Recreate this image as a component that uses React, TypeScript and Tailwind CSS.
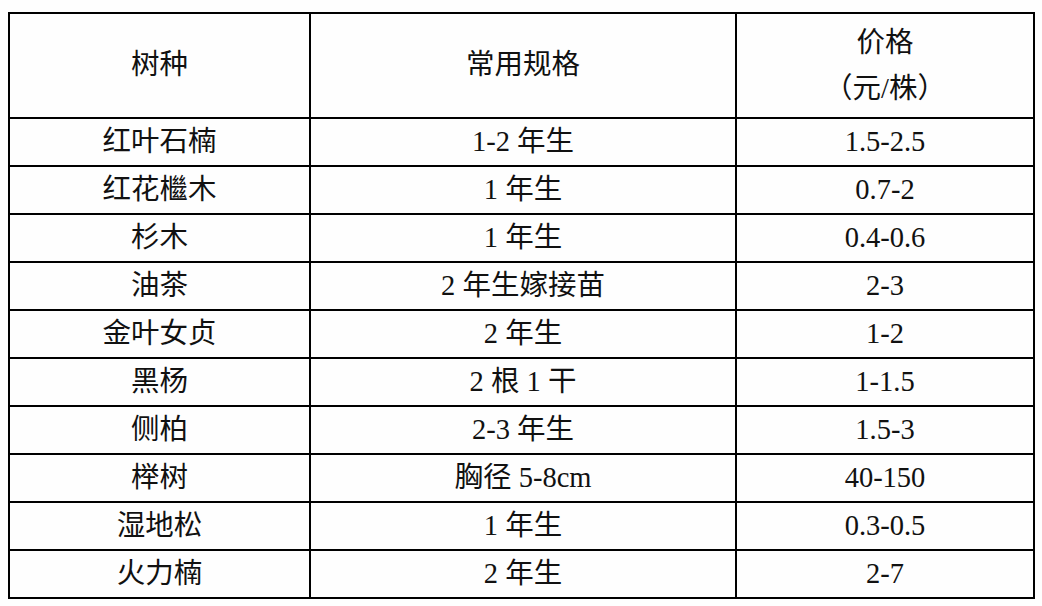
const rows: [string, string, string][] = [
  ['红叶石楠', '1-2 年生', '1.5-2.5'],
  ['红花檵木', '1 年生', '0.7-2'],
  ['杉木', '1 年生', '0.4-0.6'],
  ['油茶', '2 年生嫁接苗', '2-3'],
  ['金叶女贞', '2 年生', '1-2'],
  ['黑杨', '2 根 1 干', '1-1.5'],
  ['侧柏', '2-3 年生', '1.5-3'],
  ['榉树', '胸径 5-8cm', '40-150'],
  ['湿地松', '1 年生', '0.3-0.5'],
  ['火力楠', '2 年生', '2-7'],
]

const cell = 'border-2 border-black text-center align-middle p-0 font-normal'

export default function App() {
  return (
    <div
      className="w-[1042px] h-[606px] bg-[#fefefe] pt-[12px] pl-[8px] text-[28.5px] text-[#111]"
      style={{ fontFamily: '"Liberation Serif", "Noto Sans CJK SC", serif' }}
    >
      <table className="border-collapse table-fixed w-[1025px]">
        <colgroup>
          <col className="w-[301px]" />
          <col className="w-[426px]" />
          <col className="w-[298px]" />
        </colgroup>
        <thead>
          <tr className="h-[105px]">
            <th className={cell}>树种</th>
            <th className={cell}>常用规格</th>
            <th className={`${cell} leading-[46px]`}>
              <div>价格</div>
              <div>（元/株）</div>
            </th>
          </tr>
        </thead>
        <tbody>
          {rows.map(([name, spec, price]) => (
            <tr key={name} className="h-[48px]">
              <td className={cell}>{name}</td>
              <td className={cell}>{spec}</td>
              <td className={cell}>{price}</td>
            </tr>
          ))}
        </tbody>
      </table>
    </div>
  )
}
